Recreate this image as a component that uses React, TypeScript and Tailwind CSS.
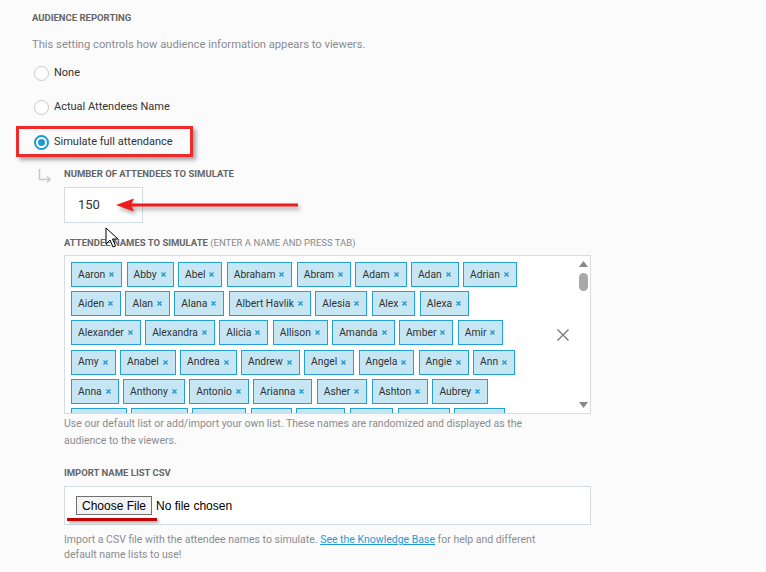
import React from "react";

const ROWS: string[][] = [
  ["Aaron", "Abby", "Abel", "Abraham", "Abram", "Adam", "Adan", "Adrian"],
  ["Aiden", "Alan", "Alana", "Albert Havlik", "Alesia", "Alex", "Alexa"],
  ["Alexander", "Alexandra", "Alicia", "Allison", "Amanda", "Amber", "Amir"],
  ["Amy", "Anabel", "Andrea", "Andrew", "Angel", "Angela", "Angie", "Ann"],
  ["Anna", "Anthony", "Antonio", "Arianna", "Asher", "Ashton", "Aubrey"],
  ["Audrey", "August", "Aurora", "Ava", "Avery", "Axel", "Ayden", "Bailey"],
];

function Tag({ name }: { name: string }) {
  return (
    <div className="inline-flex shrink-0 items-center h-[25px] pl-[6px] pr-[7px] gap-[4px] border border-[#23a0d6] bg-[#c6e6f3] text-[10.3px] text-[#333]">
      <span>{name}</span>
      <svg width="5" height="5" viewBox="0 0 5 5">
        <path d="M0.5 0.5 L4.5 4.5 M4.5 0.5 L0.5 4.5" stroke="#1f9bd2" strokeWidth="1.4" />
      </svg>
    </div>
  );
}

function Radio({ label, checked }: { label: string; checked?: boolean }) {
  return (
    <div className="flex items-center h-5 pl-[2px] gap-[5px]">
      {checked ? (
        <span className="w-[15px] h-[15px] rounded-full border-2 border-[#1c9ad6] bg-white flex items-center justify-center">
          <span className="w-[7px] h-[7px] rounded-full bg-[#1c9ad6]" />
        </span>
      ) : (
        <span className="w-[15px] h-[15px] rounded-full border border-[#c9c9c9] bg-white" />
      )}
      <span className="text-[11px] text-[#333]">{label}</span>
    </div>
  );
}

export default function App() {
  return (
    <div
      className="relative min-h-screen bg-[#fbfbfb] pl-8 pt-[12px]"
      style={{ fontFamily: "Roboto, 'Liberation Sans', sans-serif" }}
    >
      <div className="text-[9.5px] font-bold leading-[12px] text-[#666]">
        AUDIENCE REPORTING
      </div>
      <p className="mt-[14px] text-[11.2px] leading-[14px] text-[#8a8d91]">
        This setting controls how audience information appears to viewers.
      </p>

      <div className="mt-[11px]">
        <Radio label="None" />
      </div>
      <div className="mt-[14px]">
        <Radio label="Actual Attendees Name" />
      </div>
      <div className="relative mt-[15px]">
        <Radio label="Simulate full attendance" checked />
        <div className="absolute left-[-16px] top-[-6px] w-[177px] h-[31px] border-[3px] border-[#ee2a2a] shadow-[3px_3px_4px_rgba(0,0,0,0.35)]" />
      </div>

      <div className="flex mt-[16px]">
        <div className="w-8 shrink-0 pl-[6px]">
          <svg width="14" height="14" viewBox="0 0 14 14" className="mt-[1px]">
            <path d="M1.5 0 V10.5 H12" fill="none" stroke="#c8c8c8" strokeWidth="1.5" />
            <path d="M9 7.5 L12 10.5 L9 13.5" fill="none" stroke="#c8c8c8" strokeWidth="1.5" />
          </svg>
        </div>

        <div className="w-[527px]">
          <div className="text-[9.5px] font-bold leading-[12px] text-[#666]">
            NUMBER OF ATTENDEES TO SIMULATE
          </div>
          <div className="relative mt-[7px] w-[79px] h-9 border border-[#d5dde4] bg-white flex items-center pl-[13px] text-[13px] text-[#333]">
            150
            <svg
              width="190"
              height="20"
              viewBox="0 0 190 20"
              className="absolute left-[50px] top-[7px] drop-shadow-[2px_3px_2px_rgba(0,0,0,0.35)]"
            >
              <path d="M16 8.5 H183 V11.5 H16 Z" fill="#ee1c1c" />
              <path d="M1 10 L19 3.5 L16 10 L19 16.5 Z" fill="#ee1c1c" />
            </svg>
          </div>

          <div className="mt-[14px] text-[9.5px] font-bold leading-[12px] text-[#666]">
            ATTENDEE NAMES TO SIMULATE{" "}
            <span className="font-normal text-[#888]">(ENTER A NAME AND PRESS TAB)</span>
          </div>

          <div className="mt-[6px] h-[159px] border border-[#d5dde4] bg-white flex overflow-hidden">
            <div className="flex-1 min-w-0 overflow-hidden pl-[6px] pt-[6px] flex flex-col gap-[4.2px]">
              {ROWS.map((row, i) => (
                <div key={i} className="flex gap-[4.3px]">
                  {row.map((n) => (
                    <Tag key={n} name={n} />
                  ))}
                </div>
              ))}
            </div>
            <div className="self-center w-3 mr-2">
              <svg width="12" height="12" viewBox="0 0 12 12">
                <path d="M0.5 0.5 L11.5 11.5 M11.5 0.5 L0.5 11.5" stroke="#7a7a7a" strokeWidth="1.4" />
              </svg>
            </div>
            <div className="w-[13px] flex flex-col items-center pt-[5px] pb-[5px]">
              <svg width="9" height="6" viewBox="0 0 9 6">
                <path d="M0 6 L4.5 0 L9 6 Z" fill="#888" />
              </svg>
              <div className="mt-[6px] w-[9px] h-[18px] rounded-full bg-[#a8a8a8]" />
              <div className="flex-1" />
              <svg width="9" height="6" viewBox="0 0 9 6">
                <path d="M0 0 L4.5 6 L9 0 Z" fill="#888" />
              </svg>
            </div>
          </div>

          <p className="mt-[1px] text-[10.5px] leading-[17px] text-[#8a8d91]">
            Use our default list or add/import your own list. These names are randomized and displayed as the
            <br />
            audience to the viewers.
          </p>

          <div className="mt-[18px] text-[9.5px] font-bold leading-[12px] text-[#666]">
            IMPORT NAME LIST CSV
          </div>
          <div className="relative mt-[7px] h-[39px] border border-[#d5dde4] bg-white flex items-center pl-[11px]">
            <div
              className="h-[19px] px-[5px] border border-[#707070] bg-[#f3f3f3] flex items-center text-[12px] text-black"
              style={{ fontFamily: "'Liberation Sans', Arial, sans-serif" }}
            >
              Choose File
            </div>
            <span
              className="ml-[4px] text-[12px] text-black"
              style={{ fontFamily: "'Liberation Sans', Arial, sans-serif" }}
            >
              No file chosen
            </span>
            <div className="absolute left-[2px] top-[31px] w-[90px] h-[3px] bg-[#c40000] shadow-[2px_2px_3px_rgba(0,0,0,0.35)]" />
          </div>

          <p className="mt-[7px] text-[10.5px] leading-[15px] text-[#8a8d91]">
            Import a CSV file with the attendee names to simulate.{" "}
            <a className="text-[#1e9ad6] underline">See the Knowledge Base</a> for help and different
            <br />
            default name lists to use!
          </p>
        </div>
      </div>

      <svg
        width="14"
        height="22"
        viewBox="0 0 14 22"
        className="absolute left-[105px] top-[227px]"
      >
        <path
          d="M1 1 V17 L5 13 L8 20 L10.5 19 L7.5 12 H13 Z"
          fill="white"
          stroke="black"
          strokeWidth="1"
          strokeLinejoin="round"
        />
      </svg>
    </div>
  );
}
